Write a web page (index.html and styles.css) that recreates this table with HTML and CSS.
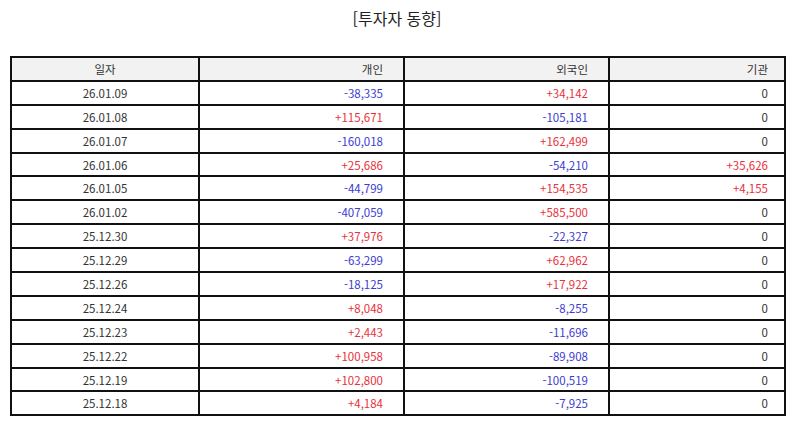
FILE: index.html
```html
<!DOCTYPE html>
<html lang="ko">
<head>
<meta charset="utf-8">
<title>투자자 동향</title>
<link rel="stylesheet" href="styles.css">
</head>
<body>
<div class="page">
  <h1 class="title">[투자자 동향]</h1>
  <table class="grid">
    <colgroup>
      <col class="c-date"><col class="c-num"><col class="c-num"><col class="c-last">
    </colgroup>
    <thead>
      <tr><th class="date">일자</th><th>개인</th><th>외국인</th><th class="last">기관</th></tr>
    </thead>
    <tbody>
      <tr><td class="date">26.01.09</td><td class="dn">-38,335</td><td class="up">+34,142</td><td class="last">0</td></tr>
      <tr><td class="date">26.01.08</td><td class="up">+115,671</td><td class="dn">-105,181</td><td class="last">0</td></tr>
      <tr><td class="date">26.01.07</td><td class="dn">-160,018</td><td class="up">+162,499</td><td class="last">0</td></tr>
      <tr><td class="date">26.01.06</td><td class="up">+25,686</td><td class="dn">-54,210</td><td class="last up">+35,626</td></tr>
      <tr><td class="date">26.01.05</td><td class="dn">-44,799</td><td class="up">+154,535</td><td class="last up">+4,155</td></tr>
      <tr><td class="date">26.01.02</td><td class="dn">-407,059</td><td class="up">+585,500</td><td class="last">0</td></tr>
      <tr><td class="date">25.12.30</td><td class="up">+37,976</td><td class="dn">-22,327</td><td class="last">0</td></tr>
      <tr><td class="date">25.12.29</td><td class="dn">-63,299</td><td class="up">+62,962</td><td class="last">0</td></tr>
      <tr><td class="date">25.12.26</td><td class="dn">-18,125</td><td class="up">+17,922</td><td class="last">0</td></tr>
      <tr><td class="date">25.12.24</td><td class="up">+8,048</td><td class="dn">-8,255</td><td class="last">0</td></tr>
      <tr><td class="date">25.12.23</td><td class="up">+2,443</td><td class="dn">-11,696</td><td class="last">0</td></tr>
      <tr><td class="date">25.12.22</td><td class="up">+100,958</td><td class="dn">-89,908</td><td class="last">0</td></tr>
      <tr><td class="date">25.12.19</td><td class="up">+102,800</td><td class="dn">-100,519</td><td class="last">0</td></tr>
      <tr><td class="date">25.12.18</td><td class="up">+4,184</td><td class="dn">-7,925</td><td class="last">0</td></tr>
    </tbody>
  </table>
</div>
</body>
</html>
```
FILE: styles.css
```css
html, body {
  margin: 0;
  padding: 0;
  background: #ffffff;
}
.page {
  padding: 0 10px 0 10px;
  font-family: "Noto Sans CJK KR", "Noto Sans", sans-serif;
  color: #333333;
}
.title {
  margin: 0;
  padding-top: 6px;
  height: 50px;
  box-sizing: border-box;
  text-align: center;
  font-size: 16px;
  font-weight: normal;
  line-height: 24px;
  color: #222222;
}
.grid {
  width: 774px;
  border-collapse: collapse;
  table-layout: fixed;
  font-size: 11.5px;
  margin-top: 6px;
}
.c-date { width: 188px; }
.c-num { width: 205px; }
.c-last { width: 176px; }
.grid th,
.grid td {
  border: 2px solid #111111;
  height: 21.9px;
  padding: 0 20px 0 4px;
  text-align: right;
  font-weight: normal;
  line-height: 14px;
  white-space: nowrap;
}
.grid th {
  background: #f2f2f2;
}
.grid .date {
  text-align: center;
  padding: 0 4px;
}
.grid .last {
  padding-right: 16px;
}
.up { color: #e8323c; }
.dn { color: #3c3cd0; }
```
